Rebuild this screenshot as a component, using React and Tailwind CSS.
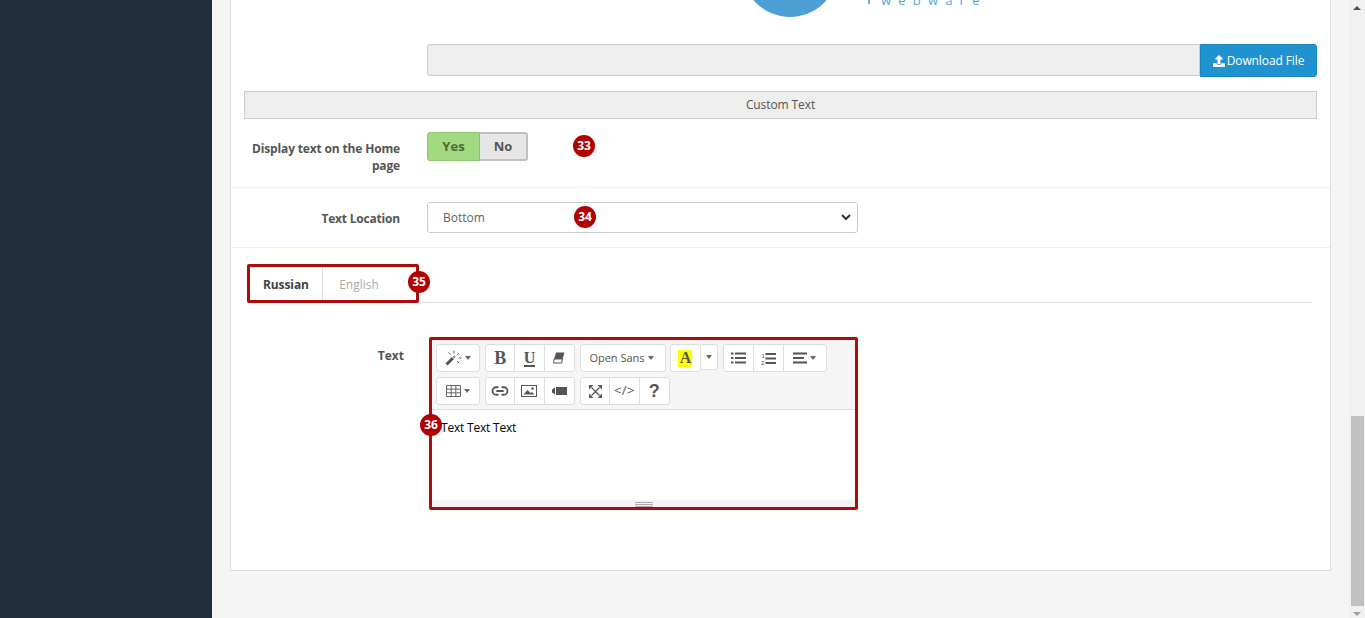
import React from "react";
import { FaUpload } from "react-icons/fa";
import { Link2 } from "lucide-react";

function Caret() {
  return <span className="ml-[3px] inline-block border-x-[3px] border-t-[4px] border-x-transparent border-t-[#666]" />;
}

function Badge({ n, className }) {
  return (
    <span className={"absolute flex h-[22px] w-[22px] items-center justify-center rounded-full bg-[#b00000] text-[12px] font-bold text-white " + className}>
      {n}
    </span>
  );
}

function ToolGroup({ children }) {
  return <div className="flex h-[28px] rounded-[3px] border border-[#dedede] bg-white divide-x divide-[#dedede]">{children}</div>;
}

function Tool({ children, w = "w-[29.34px]" }) {
  return <div className={"flex h-full items-center justify-center text-[#555] " + w}>{children}</div>;
}

function WandIcon() {
  return (
    <svg width="17" height="16" viewBox="0 0 17 16" fill="none" stroke="#555">
      <path d="M1.5 14.5L8 8" strokeWidth="3" />
      <path d="M8.5 7.5L10 6" strokeWidth="2" stroke="#888" />
      <path d="M9 0.5v3M3.5 2.5l2 2M14 3l-2 2M16.5 8h-3M14 13l-2-2" strokeWidth="1" stroke="#666" />
    </svg>
  );
}

function EraserIcon() {
  return (
    <svg width="12" height="12" viewBox="0 0 12 12">
      <path d="M3 0.5h8.5L9.5 7H1z" fill="#555" />
      <path d="M1 7h8.5L8.7 11H0.5z" fill="none" stroke="#555" strokeWidth="1" />
    </svg>
  );
}

function ListUlIcon() {
  return (
    <svg width="15" height="12" viewBox="0 0 15 12" fill="#555">
      <rect x="0" y="0.5" width="2.5" height="2" />
      <rect x="0" y="5" width="2.5" height="2" />
      <rect x="0" y="9.5" width="2.5" height="2" />
      <rect x="4" y="0.5" width="11" height="2" />
      <rect x="4" y="5" width="11" height="2" />
      <rect x="4" y="9.5" width="11" height="2" />
    </svg>
  );
}

function ListOlIcon() {
  return (
    <svg width="15" height="13" viewBox="0 0 15 13" fill="#555">
      <text x="0.5" y="5.5" fontSize="6" fontFamily="Liberation Sans">1</text>
      <text x="0" y="12.5" fontSize="6" fontFamily="Liberation Sans">2</text>
      <rect x="4.5" y="1" width="10.5" height="2" />
      <rect x="4.5" y="5.5" width="10.5" height="2" />
      <rect x="4.5" y="10" width="10.5" height="2" />
    </svg>
  );
}

function AlignIcon() {
  return (
    <svg width="14" height="12" viewBox="0 0 14 12" fill="#555">
      <rect x="0" y="0.5" width="14" height="2" />
      <rect x="0" y="5" width="11" height="2" />
      <rect x="0" y="9.5" width="14" height="2" />
    </svg>
  );
}

function TableIcon() {
  return (
    <svg width="15" height="12" viewBox="0 0 15 12" fill="none" stroke="#666">
      <path d="M0.5 0.5h14v11h-14zM0.5 4.2h14M0.5 7.8h14M5.2 0.5v11M9.8 0.5v11" strokeWidth="1" />
    </svg>
  );
}

function PictureIcon() {
  return (
    <svg width="16" height="12" viewBox="0 0 16 12">
      <rect x="0.5" y="0.5" width="15" height="11" fill="none" stroke="#555" />
      <path d="M2.5 9.5L6.5 5l3 3 1.5-1 2.5 2.5z" fill="#555" />
      <circle cx="11.5" cy="3.5" r="1.2" fill="#555" />
    </svg>
  );
}

function VideoIcon() {
  return (
    <svg width="15" height="8" viewBox="0 0 15 8" fill="#555">
      <path d="M0 2.5L3 0.5v7L0 5.5z" />
      <rect x="4" y="0" width="11" height="8" />
    </svg>
  );
}

function ExpandIcon() {
  return (
    <svg width="13" height="13" viewBox="0 0 13 13" fill="#555">
      <path d="M2.5 2.5L10.5 10.5M10.5 2.5L2.5 10.5" stroke="#555" strokeWidth="1.2" />
      <path d="M0 0h4.5L0 4.5zM13 0v4.5L8.5 0zM0 13V8.5L4.5 13zM13 13H8.5L13 8.5z" />
    </svg>
  );
}

export default function App() {
  return (
    <div className="flex h-[618px] overflow-hidden bg-[#f5f5f5] font-['Open_Sans',sans-serif] text-[13px] text-[#555]">
      <div className="w-[212px] shrink-0 bg-[#212d3a]" />

      <div className="flex-1 pl-[18px] pr-[18px]">
        <div className="relative h-[571px] border-x border-b border-[#dddddd] bg-white">
          {/* logo, cut off by the scroll position */}
          <div className="relative h-[44px] overflow-hidden">
            <div className="absolute left-[511px] top-[-79px] h-[96px] w-[96px] rounded-full bg-[#4e9fd5]" />
            <div className="absolute left-[637px] top-0 h-[4px] w-[2px] bg-[#6aaedb]" />
            <div className="absolute left-[650px] top-[-9px] text-[13px] leading-[18px] tracking-[7.2px] text-[#5aa5d6]">webware</div>
          </div>

          <div className="flex pl-[196px] pr-[13px]">
            <div className="h-[32px] flex-1 rounded-l-[3px] border border-[#cccccc] bg-[#eeeeee]" />
            <button className="flex h-[33px] w-[117px] items-center justify-center gap-[2px] rounded-r-[3px] border border-[#1b87c1] bg-[#1f92d0] text-[12px] tracking-[-0.1px] text-white">
              <FaUpload className="h-[12px] w-[12px]" />
              Download File
            </button>
          </div>

          <div className="mx-[13px] mt-[14px] flex h-[28px] items-center justify-center border border-[#cccccc] bg-[#eeeeee] text-[12px] tracking-[-0.1px] text-[#555]">
            Custom Text
          </div>

          <div className="flex h-[69px] border-b border-[#eeeeee] pt-[13px]">
            <label className="w-[169px] pt-[8px] text-right text-[12px] font-bold leading-[17px] tracking-[-0.16px]">Display text on the Home page</label>
            <div className="ml-[27px] flex h-[29px] w-[101px] text-[13px] font-bold">
              <div className="flex w-[53px] items-center justify-center rounded-l-[3px] border border-[#8cc46c] bg-[#a3d97f] text-[#4c6b3a]">Yes</div>
              <div className="flex flex-1 items-center justify-center rounded-r-[3px] border-2 border-l-0 border-[#c0c0c0] bg-[#e6e6e6] text-[#555]">No</div>
            </div>
          </div>

          <div className="flex h-[60px] items-start border-b border-[#eeeeee] pt-[14px]">
            <label className="w-[169px] pt-[8px] text-right text-[12px] font-bold leading-[18px] tracking-[-0.2px]">Text Location</label>
            <div className="ml-[27px] flex h-[31px] w-[431px] items-center justify-between rounded-[3px] border border-[#cccccc] bg-white pl-[15px] pr-[6px] text-[12px] text-[#666]">
              <span className="pt-[1px]">Bottom</span>
              <svg width="10" height="7" viewBox="0 0 10 7"><path d="M1 1l4 4 4-4" fill="none" stroke="#333" strokeWidth="2" /></svg>
            </div>
          </div>

          <div className="ml-[16px] mr-[18px] mt-[18px] flex h-[37px] border-b border-[#dddddd] pt-[2px] text-[12px]">
            <div className="flex w-[76px] items-center border-r border-[#dddddd] pl-[16px] font-bold tracking-[-0.1px] text-[#444]">Russian</div>
            <div className="flex w-[72px] items-center justify-center text-[#aaaaaa]">English</div>
          </div>

          <div className="mt-[35px] flex">
            <label className="w-[173px] pt-[9px] text-right text-[12px] font-bold leading-[18px]">Text</label>
            <div className="ml-[26px] w-[428px]">
              <div className="flex h-[72px] flex-col gap-[5px] border-b border-[#dddddd] bg-[#f5f5f5] px-[6px] pt-[6px]">
                <div className="flex gap-[5px]">
                  <ToolGroup><Tool w="w-[42px]"><WandIcon /><Caret /></Tool></ToolGroup>
                  <ToolGroup>
                    <Tool><span className="font-['Liberation_Serif',serif] text-[18px] font-bold leading-none">B</span></Tool>
                    <Tool><span className="border-b-2 border-[#555] font-['Liberation_Serif',serif] text-[16px] font-bold leading-[15px]">U</span></Tool>
                    <Tool><EraserIcon /></Tool>
                  </ToolGroup>
                  <ToolGroup><Tool w="w-[84px]"><span className="-ml-[3px] text-[11px]">Open Sans</span><Caret /></Tool></ToolGroup>
                  <div className="-ml-px flex">
                    <ToolGroup>
                      <Tool w="w-[29px]">
                        <span className="flex h-[17px] w-[14px] items-center justify-center bg-[#ffff00] font-['Liberation_Serif',serif] text-[16px] font-bold text-[#555]">A</span>
                      </Tool>
                    </ToolGroup>
                    <div className="flex h-[26px] w-[17px] items-center justify-center rounded-r-[3px] border border-l-0 border-[#dedede] bg-white pr-[3px]"><Caret /></div>
                  </div>
                  <ToolGroup>
                    <Tool w="w-[30px]"><ListUlIcon /></Tool>
                    <Tool w="w-[30px]"><ListOlIcon /></Tool>
                    <Tool w="w-[42px]"><AlignIcon /><Caret /></Tool>
                  </ToolGroup>
                </div>
                <div className="flex gap-[5px]">
                  <ToolGroup><Tool w="w-[42px]"><TableIcon /><Caret /></Tool></ToolGroup>
                  <ToolGroup>
                    <Tool><Link2 size={18} strokeWidth={2.4} /></Tool>
                    <Tool><PictureIcon /></Tool>
                    <Tool><VideoIcon /></Tool>
                  </ToolGroup>
                  <ToolGroup>
                    <Tool><ExpandIcon /></Tool>
                    <Tool><span className="text-[13px] tracking-[0.5px]">&lt;/&gt;</span></Tool>
                    <Tool><span className="font-['Liberation_Sans',sans-serif] text-[18px] font-bold leading-none">?</span></Tool>
                  </ToolGroup>
                </div>
              </div>
              <div className="h-[90px] bg-white px-[11px] pt-[9px] text-[12px] leading-[18px] tracking-[-0.2px] text-black">Text Text Text</div>
              <div className="flex h-[9px] flex-col items-center justify-center gap-[1px] bg-[#f5f5f5]">
                <div className="h-px w-[18px] bg-[#aaaaaa]" />
                <div className="h-px w-[18px] bg-[#aaaaaa]" />
                <div className="h-px w-[18px] bg-[#aaaaaa]" />
              </div>
            </div>
          </div>

          {/* red annotation frames and numbered badges */}
          <div className="absolute left-[16px] top-[264px] h-[39px] w-[172px] rounded-[2px] border-[3px] border-[#ab0d0d]" />
          <div className="absolute left-[198px] top-[337px] h-[173px] w-[429px] rounded-[2px] border-[3px] border-[#ab0d0d]" />
          <Badge n="33" className="left-[342px] top-[135px]" />
          <Badge n="34" className="left-[343px] top-[206px]" />
          <Badge n="35" className="left-[177px] top-[271px]" />
          <Badge n="36" className="left-[189px] top-[414px]" />
        </div>
      </div>

      <div className="relative w-[16px] shrink-0 bg-[#f1f1f1]">
        <div className="absolute left-[4px] top-[6px] border-x-[4px] border-b-[4px] border-x-transparent border-b-[#505050]" />
        <div className="absolute left-[2px] top-[416px] h-[190px] w-[13px] bg-[#c1c1c1]" />
        <div className="absolute left-[4px] top-[612px] border-x-[4px] border-t-[4px] border-x-transparent border-t-[#a0a0a0]" />
      </div>
    </div>
  );
}
